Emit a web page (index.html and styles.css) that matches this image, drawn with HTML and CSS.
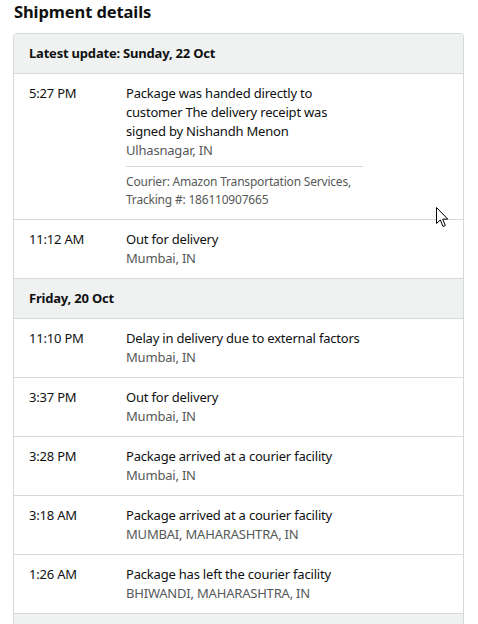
FILE: index.html
```html
<!DOCTYPE html>
<html>
<head>
<meta charset="utf-8">
<link rel="stylesheet" href="styles.css">
</head>
<body>
<div class="page">
  <h2 class="title">Shipment details</h2>
  <div class="box">
    <div class="day">Latest update: Sunday, 22 Oct</div>
    <div class="row">
      <div class="time">5:27 PM</div>
      <div class="info narrow">
        <div class="event">Package was handed directly to customer The delivery receipt was signed by Nishandh Menon</div>
        <div class="loc">Ulhasnagar, IN</div>
        <div class="courier">Courier: Amazon Transportation Services, Tracking #: 186110907665</div>
      </div>
    </div>
    <div class="row">
      <div class="time">11:12 AM</div>
      <div class="info">
        <div class="event">Out for delivery</div>
        <div class="loc">Mumbai, IN</div>
      </div>
    </div>
    <div class="day">Friday, 20 Oct</div>
    <div class="row">
      <div class="time">11:10 PM</div>
      <div class="info">
        <div class="event">Delay in delivery due to external factors</div>
        <div class="loc">Mumbai, IN</div>
      </div>
    </div>
    <div class="row">
      <div class="time">3:37 PM</div>
      <div class="info">
        <div class="event">Out for delivery</div>
        <div class="loc">Mumbai, IN</div>
      </div>
    </div>
    <div class="row">
      <div class="time">3:28 PM</div>
      <div class="info">
        <div class="event">Package arrived at a courier facility</div>
        <div class="loc">Mumbai, IN</div>
      </div>
    </div>
    <div class="row">
      <div class="time">3:18 AM</div>
      <div class="info">
        <div class="event">Package arrived at a courier facility</div>
        <div class="loc">MUMBAI, MAHARASHTRA, IN</div>
      </div>
    </div>
    <div class="row">
      <div class="time">1:26 AM</div>
      <div class="info">
        <div class="event">Package has left the courier facility</div>
        <div class="loc">BHIWANDI, MAHARASHTRA, IN</div>
      </div>
    </div>
    <div class="day">&nbsp;</div>
  </div>
</div>
<svg class="cursor" width="13" height="21" viewBox="0 0 13 21">
  <path d="M0.5 0.5 L0.5 16.5 L4.3 12.9 L7 19.5 L9.3 18.5 L6.7 12.1 L11.8 12.1 Z" fill="#fff" stroke="#000" stroke-width="1" stroke-linejoin="miter"/>
</svg>
</body>
</html>
```
FILE: styles.css
```css
html, body {
  margin: 0;
  padding: 0;
  background: #fff;
}
body {
  font-family: "Noto Sans", "Open Sans", "DejaVu Sans", sans-serif;
  color: #0f1111;
  font-size: 13px;
  line-height: 19px;
  letter-spacing: -0.2px;
  height: 624px;
  overflow: hidden;
  position: relative;
}
.page {
  padding: 0 14px 0 13px;
}
.title {
  margin: 0;
  padding: 0 0 0 1px;
  font-size: 16.5px;
  line-height: 24px;
  font-weight: 700;
  letter-spacing: -0.1px;
  height: 33px;
  box-sizing: border-box;
}
.box {
  border: 1px solid #d5d9d9;
  border-radius: 4px;
  overflow: hidden;
}
.day {
  background: #f0f2f2;
  font-weight: 700;
  padding: 10px 15px;
  border-top: 1px solid #d5d9d9;
}
.day:first-child {
  border-top: none;
}
.row {
  display: flex;
  padding: 10px 15px;
  border-top: 1px solid #d5d9d9;
}
.time {
  width: 97px;
  flex: none;
}
.info {
  flex: 1;
}
.info.narrow {
  flex: none;
  width: 237px;
}
.loc {
  color: #565959;
}
.courier {
  margin-top: 6px;
  padding-top: 6px;
  border-top: 1px solid #d5d9d9;
  color: #565959;
  font-size: 12px;
  line-height: 18px;
}
.cursor {
  position: absolute;
  left: 436px;
  top: 207px;
}
```
